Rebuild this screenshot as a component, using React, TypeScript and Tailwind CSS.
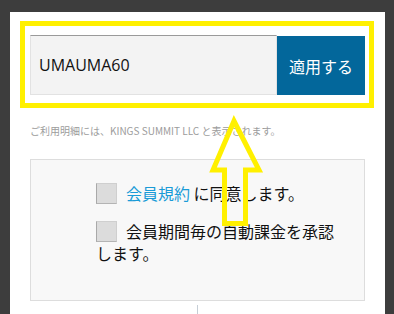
import React from "react";

const jp = { fontFamily: '"Noto Sans CJK JP", "Noto Sans", sans-serif' };

const Checkbox = () => (
  <span className="inline-block w-[21px] h-[21px] align-[-4px] mr-[9px] bg-[#dcdcdc] border border-[#cfcfcf] border-l-[#a9a9a9] border-b-[#b4b4b4]" />
);

const App = () => {
  return (
    <div className="relative w-[394px] h-[314px] overflow-hidden bg-[#3d3d3d] pt-[12px] pl-[10px] pr-[9px]" style={jp}>
      <div className="bg-white h-full pl-[20px] pr-[20px] pt-[23px]">
        {/* Coupon row */}
        <div className="flex h-[60px]">
          <div
            className="flex-1 flex items-center pl-[8px] bg-[#f3f3f3] border border-[#e2e2e2] border-t-[#9a9a9a] text-[16px] text-[#111]"
            style={{ fontFamily: '"Open Sans", "Noto Sans", sans-serif' }}
          >
            UMAUMA60
          </div>
          <button className="w-[88px] mt-[1px] bg-[#03679b] text-white text-[16px]">適用する</button>
        </div>

        <p className="mt-[29px] text-[10px] leading-[14px] text-[#9c9c9c]">
          ご利用明細には、KINGS SUMMIT LLC と表示されます。
        </p>

        {/* Agreement box */}
        <div className="mt-[21px] h-[142px] bg-[#f8f8f8] border border-[#dddddd] pl-[65px] pr-[24px] pt-[22px] text-[16px] leading-[22px] text-[#111]">
          <div>
            <Checkbox />
            <span className="text-[#1a9bd7]">会員規約</span> に同意します。
          </div>
          <div className="mt-[16px]">
            <Checkbox />
            会員期間毎の自動課金を承認します。
          </div>
        </div>

        <div className="flex justify-center mt-[4px]">
          <div className="w-px h-[12px] bg-[#c6ced6]" />
        </div>
      </div>

      {/* yellow annotation */}
      <div className="absolute left-[20px] top-[21px] w-[354px] h-[87px] border-[5px] border-[#fff000]" />
      <svg className="absolute left-0 top-0" width="394" height="314" viewBox="0 0 394 314">
        <polygon
          points="234,121 259,170 245.5,170 245.5,223.5 224.5,223.5 224.5,170 213,170"
          fill="none"
          stroke="#fff000"
          strokeWidth="5"
          strokeLinejoin="miter"
        />
      </svg>
    </div>
  );
};

export default App;
